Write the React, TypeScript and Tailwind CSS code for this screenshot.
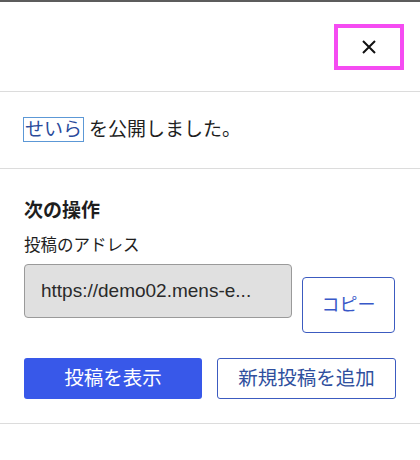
export default function App() {
  return (
    <div
      className="w-[420px] h-[460px] bg-white text-[#1e1e1e] overflow-hidden"
      style={{ fontFamily: '"Liberation Sans", "Noto Sans CJK JP", sans-serif' }}
    >
      <div className="h-[2px] bg-[#5c5c5c]" />
      {/* header */}
      <div className="h-[90px] border-b border-[#dcdcdc] flex items-start justify-end pr-[16px] pt-[22px]">
        <button className="w-[70px] h-[46px] border-[4px] border-[#f54cf2] flex items-center justify-center">
          <svg width="16" height="16" viewBox="0 0 16 16" fill="none" stroke="#111" strokeWidth="2">
            <path d="M2 2L14 14M14 2L2 14" />
          </svg>
        </button>
      </div>
      {/* notice */}
      <div className="h-[77px] border-b border-[#dcdcdc] px-[23px] pt-[25px]">
        <p className="text-[19px] leading-[25px] flex items-center">
          <a className="border border-[#5c98d6] px-[1px] text-[#2a4b9b] leading-[23px]">せいら</a>
          <span className="ml-[5px]">を公開しました。</span>
        </p>
      </div>
      {/* next actions */}
      <div className="h-[255px] border-b border-[#dcdcdc] px-[24px] pt-[30px]">
        <h2 className="text-[19px] leading-[24px] font-bold">次の操作</h2>
        <div className="mt-[11px] text-[16.5px] leading-[22px]">投稿のアドレス</div>
        <div className="mt-[8px] flex items-start gap-[10px]">
          <div className="w-[268px] h-[54px] bg-[#e0e0e0] border border-[#9a9a9a] rounded-[4px] flex items-center pl-[16px] text-[19px] text-[#2a2a2a]">
            https://demo02.mens-e...
          </div>
          <button className="mt-[13px] w-[93px] h-[56px] border border-[#3c5bc0] rounded-[4px] text-[#3858c8] text-[18px]">
            コピー
          </button>
        </div>
        <div className="mt-[25px] flex gap-[15px]">
          <button className="w-[178px] h-[41px] rounded-[3px] bg-[#3858e9] text-white text-[19.5px]">
            投稿を表示
          </button>
          <button className="w-[179px] h-[41px] rounded-[3px] border border-[#3c5bc0] text-[#2f4f9e] text-[19.5px]">
            新規投稿を追加
          </button>
        </div>
      </div>
    </div>
  );
}
